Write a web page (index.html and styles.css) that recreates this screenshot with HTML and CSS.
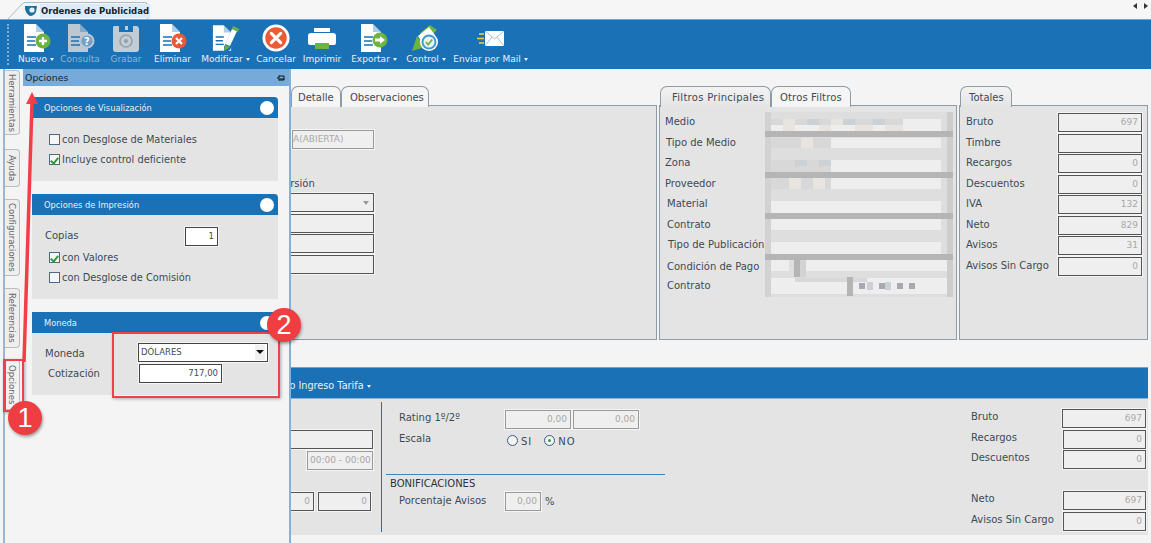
FILE: index.html
```html
<!DOCTYPE html>
<html lang="es">
<head>
<meta charset="utf-8">
<title>Ordenes de Publicidad</title>
<link rel="stylesheet" href="styles.css">
</head>
<body>
<div class="app">
  <svg class="defs" width="0" height="0">
    <defs>
      <symbol id="doc" viewBox="0 0 22 28">
        <path d="M1 0h12l8 8v20H1z" fill="currentColor"/>
        <path d="M13 0l8 8h-8z" fill="#1b71b5" opacity=".35"/>
        <path d="M4 13h9M4 17h8M4 21h9" stroke="#1b71b5" stroke-width="1.6"/>
      </symbol>
    </defs>
  </svg>

  <header class="tabstrip">
    <div class="doc-tab-wrap">
      <svg class="doc-tab-slant" width="16" height="17" viewBox="0 0 16 17"><path d="M0 17L14 2q1-1 2-1v16z" fill="#f2f4f6"/><path d="M0 17L14 2q1-1 2-1" fill="none" stroke="#aebcc8"/></svg>
      <div class="doc-tab">
        <svg class="doc-tab-icon" viewBox="0 0 12 12"><path d="M0 1h12l-1 6q-2 4-6 4Q1 9 0 4z" fill="#1f6f9f"/><circle cx="7" cy="5" r="2.6" fill="#e8f4fb"/></svg>
        <span class="doc-tab-title">Ordenes de Publicidad</span>
      </div>
    </div>
    <div class="strip-arrows"><span class="arrow-l"></span><span class="arrow-r"></span></div>
  </header>

  <nav class="toolbar">
    <div class="grip"></div>
    <div class="tools">
      <div class="tool">
        <svg class="ico" viewBox="0 0 30 28"><use href="#doc" x="2" width="22" height="28" color="#fff"/><circle cx="22" cy="17" r="7.5" fill="#6cb33f"/><path d="M22 13v8M18 17h8" stroke="#fff" stroke-width="2.4"/></svg>
        <span class="caret">Nuevo</span>
      </div>
      <div class="tool off">
        <svg class="ico" viewBox="0 0 30 28"><use href="#doc" x="2" width="22" height="28" color="#bcc8d1"/><circle cx="22" cy="17" r="7.5" fill="#bcc8d1"/><circle cx="22" cy="17" r="5.6" fill="#1b71b5" opacity=".45"/><text class="qmark" x="22" y="20.5">?</text></svg>
        <span>Consulta</span>
      </div>
      <div class="tool off">
        <svg class="ico" viewBox="0 0 30 28"><path d="M3 2h5v6h14V2h3q3 0 3 3v20q0 3-3 3H5q-3 0-3-3V3z" fill="#c3ccd3"/><rect x="14" y="2" width="3" height="4" fill="#c3ccd3"/><circle cx="15" cy="17" r="6" fill="none" stroke="#8fa1ae" stroke-width="1.5"/><circle cx="15" cy="17" r="2" fill="#8fa1ae"/></svg>
        <span>Grabar</span>
      </div>
      <div class="tool">
        <svg class="ico" viewBox="0 0 30 28"><use href="#doc" x="1" width="22" height="28" color="#fff"/><circle cx="21" cy="17" r="7.5" fill="#ea5b35"/><path d="M18 14l6 6M24 14l-6 6" stroke="#fff" stroke-width="2.2"/></svg>
        <span>Eliminar</span>
      </div>
      <div class="tool">
        <svg class="ico" viewBox="0 0 30 28"><use href="#doc" x="1" width="20" height="28" color="#fff"/><path d="M13 23l8-18 6 3-8 18-6 3z" fill="#1b71b5"/><path d="M14 20l7-15 5 2-7 15z" fill="#fff"/><path d="M21 5l1-3 6 3-1 3z" fill="#6cb33f"/><path d="M14 21l5 2-6 4z" fill="#6cb33f"/></svg>
        <span class="caret">Modificar</span>
      </div>
      <div class="tool">
        <svg class="ico" viewBox="0 0 30 30"><circle cx="15" cy="15" r="14.5" fill="#fff"/><circle cx="15" cy="15" r="11.5" fill="#ec5b38"/><path d="M10 10l10 10M20 10L10 20" stroke="#fff" stroke-width="3.2" stroke-linecap="round"/></svg>
        <span>Cancelar</span>
      </div>
      <div class="tool">
        <svg class="ico" viewBox="0 0 30 28"><path d="M7 4h16v4H7z" fill="#fff"/><path d="M4 9h22q3 0 3 3v7q0 2-2 2H3q-2 0-2-2v-7q0-3 3-3z" fill="#fff"/><rect x="8" y="19" width="14" height="6" fill="#6cb33f"/></svg>
        <span>Imprimir</span>
      </div>
      <div class="tool">
        <svg class="ico" viewBox="0 0 30 28"><use href="#doc" x="1" width="22" height="28" color="#fff"/><circle cx="21" cy="16" r="7.5" fill="#6cb33f"/><path d="M16 14.500h5V12l5 4-5 4v-2.500h-5z" fill="#fff"/></svg>
        <span class="caret">Exportar</span>
      </div>
      <div class="tool">
        <svg class="ico" viewBox="0 0 30 28"><path d="M9 9l10-8 7 5-8 8z" fill="#6cb33f"/><path d="M7 12l11-9 6 8-10 12z" fill="#fff"/><path d="M1 27l5-15 8 11z" fill="#6cb33f"/><circle cx="18" cy="18" r="9" fill="#fff"/><circle cx="18" cy="18" r="7.500" fill="#3d9ad1"/><circle cx="18" cy="18" r="5.500" fill="#e8f2f7"/><path d="M15 18l2.200 2.500 4-5" fill="none" stroke="#6cb33f" stroke-width="1.800"/></svg>
        <span class="caret">Control</span>
      </div>
      <div class="tool">
        <svg class="ico" viewBox="0 0 30 28"><rect x="9" y="7" width="19" height="15" fill="#fff"/><path d="M9 7l9.500 8L28 7M9 22l7-9M28 22l-7-9" fill="none" stroke="#9ec3de" stroke-width="1"/><path d="M3 10h5M1 14.500h7M3 19h5" stroke="#f2d24a" stroke-width="1.600"/></svg>
        <span class="caret">Enviar por Mail</span>
      </div>
    </div>
  </nav>

  <div class="workspace">
    <aside class="rail">
      <div class="rail-tab rt-herr">Herramientas</div>
      <div class="rail-tab rt-ayuda">Ayuda</div>
      <div class="rail-tab rt-conf">Configuraciones</div>
      <div class="rail-tab rt-ref">Referencias</div>
      <div class="rail-tab rt-op">Opciones</div>
    </aside>

    <main class="main">
      <div class="top-row">
        <section class="pane pane-detail">
          <div class="tabs tabs-detail">
            <div class="tab">Detalle</div>
            <div class="tab">Observaciones</div>
          </div>
          <div class="pane-body detail-body">
            <div class="field disabled f-estado">A(ABIERTA)</div>
            <div class="version-label">Versión</div>
            <div class="field f-wide f-select"><span class="sel-caret"></span></div>
            <div class="field f-wide f-tight"></div>
            <div class="field f-wide f-tight"></div>
            <div class="field f-wide f-tight"></div>
          </div>
        </section>

        <section class="pane pane-filters">
          <div class="tabs">
            <div class="tab active tab-fp">Filtros Principales</div>
            <div class="tab tab-of">Otros Filtros</div>
          </div>
          <div class="pane-body filter-body">
            <div class="filter-labels">
              <div class="fl">Medio</div>
              <div class="fl in1">Tipo de Medio</div>
              <div class="fl">Zona</div>
              <div class="fl">Proveedor</div>
              <div class="fl in2">Material</div>
              <div class="fl in2">Contrato</div>
              <div class="fl in3">Tipo de Publicación</div>
              <div class="fl in2 drop">Condición de Pago</div>
              <div class="fl in2">Contrato</div>
            </div>
            <svg class="blur" width="188" height="185" viewBox="0 0 188 185">
              <rect width="188" height="185" fill="#dedede"/>
              <rect width="6" height="185" fill="#d2d2d2"/>
              <rect x="182" width="6" height="185" fill="#cdcdcd"/>
              <g fill="#eeeeee">
                <rect x="6" y="7" width="170" height="12"/><rect x="6" y="26" width="170" height="10"/>
                <rect x="6" y="48" width="170" height="12"/><rect x="6" y="66" width="170" height="11"/>
                <rect x="6" y="89" width="170" height="12"/><rect x="6" y="107" width="170" height="11"/>
                <rect x="6" y="130" width="170" height="12"/><rect x="41" y="148" width="141" height="11"/>
                <rect x="6" y="166" width="176" height="16"/><rect x="6" y="148" width="18" height="11"/>
              </g>
              <g fill="#d8d8d8">
                <rect x="6" y="7" width="132" height="6"/><rect x="6" y="26" width="60" height="10"/>
                <rect x="6" y="48" width="60" height="12"/><rect x="6" y="66" width="60" height="11"/>
                <rect x="30" y="166" width="72" height="4"/>
              </g>
              <g fill="#e8e4e0">
                <rect x="18" y="7" width="12" height="12"/><rect x="36" y="26" width="12" height="10"/><rect x="66" y="7" width="12" height="6"/>
                <rect x="90" y="13" width="18" height="6"/><rect x="24" y="66" width="12" height="11"/><rect x="48" y="66" width="12" height="11"/>
                <rect x="120" y="13" width="18" height="6"/><rect x="54" y="13" width="12" height="6"/>
              </g>
              <g fill="#ccd1d6">
                <rect x="42" y="7" width="12" height="6"/><rect x="78" y="7" width="12" height="6"/><rect x="108" y="7" width="12" height="6"/>
                <rect x="30" y="48" width="12" height="6"/><rect x="54" y="48" width="12" height="6"/>
                <rect x="102" y="170" width="6" height="8"/><rect x="120" y="170" width="6" height="8"/>
              </g>
              <g fill="#b5b5b5">
                <rect y="19" width="188" height="6"/><rect y="60" width="188" height="6"/>
                <rect y="101" width="188" height="6"/><rect y="142" width="188" height="6"/>
                <rect x="29" y="142" width="6" height="23"/><rect x="82" y="165" width="6" height="19"/>
              </g>
              <rect x="35" y="148" width="6" height="17" fill="#d2d2d2"/>
              <g fill="#a8a8b0">
                <rect x="94" y="171" width="6" height="6"/><rect x="114" y="171" width="6" height="6"/><rect x="132" y="171" width="6" height="6"/><rect x="144" y="171" width="6" height="6"/>
              </g>
            </svg>
          </div>
        </section>

        <section class="pane pane-totals">
          <div class="tabs">
            <div class="tab active tab-tot">Totales</div>
          </div>
          <div class="pane-body totals-body">
            <div class="row"><span>Bruto</span><div class="field num">697</div></div>
            <div class="row"><span>Timbre</span><div class="field num"></div></div>
            <div class="row"><span>Recargos</span><div class="field num">0</div></div>
            <div class="row"><span>Descuentos</span><div class="field num">0</div></div>
            <div class="row"><span>IVA</span><div class="field num">132</div></div>
            <div class="row"><span>Neto</span><div class="field num">829</div></div>
            <div class="row"><span>Avisos</span><div class="field num">31</div></div>
            <div class="row"><span>Avisos Sin Cargo</span><div class="field num">0</div></div>
          </div>
        </section>
      </div>

      <div class="bluebar"><span class="caret">Modo Ingreso Tarifa</span></div>

      <div class="lower">
        <div class="col-left">
          <div class="field f-l1"></div>
          <div class="field disabled f-l2">00:00 - 00:00</div>
          <div class="pair">
            <div class="field num f-l3">0</div>
            <div class="field num f-l4">0</div>
          </div>
        </div>
        <div class="col-mid">
          <div class="mid-top">
            <div class="mid-row"><span class="mid-label rating">Rating 1º/2º</span><div class="field disabled num f-r">0,00</div><div class="field disabled num f-r">0,00</div></div>
            <div class="mid-row escala"><span class="mid-label">Escala</span>
              <span class="radio"></span><span class="rlabel r-si">SI</span>
              <span class="radio on"></span><span class="rlabel">NO</span>
            </div>
          </div>
          <div class="bonif">
            <div class="bonif-title">BONIFICACIONES</div>
            <div class="mid-row"><span class="mid-label">Porcentaje Avisos</span><div class="field disabled num f-p">0,00</div><span class="pct">%</span></div>
          </div>
        </div>
        <div class="col-right">
          <div class="row"><span>Bruto</span><div class="field num first">697</div></div>
          <div class="row"><span>Recargos</span><div class="field num">0</div></div>
          <div class="row"><span>Descuentos</span><div class="field num">0</div></div>
          <div class="row spaced"><span>Neto</span><div class="field num">697</div></div>
          <div class="row"><span>Avisos Sin Cargo</span><div class="field num">0</div></div>
        </div>
      </div>
    </main>

    <section class="drawer">
      <div class="drawer-head"><span>Opciones</span>
        <svg class="pin" viewBox="0 0 8 8"><path d="M0 4h2M2 1.500v5M2 2h5v4H2M3 5h4" fill="none" stroke="#111" stroke-width="1"/></svg>
      </div>
      <div class="group g1">
        <div class="group-head"><span>Opciones de Visualización</span><i class="dot"></i></div>
        <div class="group-body">
          <label class="check"><span class="box"></span>con Desglose de Materiales</label>
          <label class="check"><span class="box on"></span>Incluye control deficiente</label>
        </div>
      </div>
      <div class="group g2">
        <div class="group-head"><span>Opciones de Impresión</span><i class="dot"></i></div>
        <div class="group-body">
          <div class="copias"><span>Copias</span><div class="field white num copias-in">1</div></div>
          <label class="check"><span class="box on"></span>con Valores</label>
          <label class="check"><span class="box"></span>con Desglose de Comisión</label>
        </div>
      </div>
      <div class="group g3">
        <div class="group-head"><span>Moneda</span><i class="dot"></i></div>
        <div class="group-body">
          <div class="mon-row"><span class="mon-label">Moneda</span><div class="field white mon-select">DÓLARES<span class="sel-btn"></span></div></div>
          <div class="mon-row"><span class="mon-label cot">Cotización</span><div class="field white num mon-input">717,00</div></div>
        </div>
      </div>
    </section>
  </div>

  <div class="callout box-one"></div>
  <div class="callout box-two"></div>
  <svg class="arrow" width="20" height="280" viewBox="0 0 20 280"><path d="M3 270L11 10" stroke="#f23f47" stroke-width="3.500"/><path d="M11 0l6 12H5z" fill="#f23f47"/></svg>
  <div class="badge b-one">1</div>
  <div class="badge b-two">2</div>
</div>
</body>
</html>
```
FILE: styles.css
```css
* { box-sizing: border-box; }
html, body { margin: 0; height: 100%; }
body { font-family: "DejaVu Sans", sans-serif; font-size: 10px; color: #3d4a55; background: #f4f4f4; overflow: hidden; }
.defs { position: absolute; }
.app { position: relative; width: 1151px; height: 543px; overflow: hidden; display: flex; flex-direction: column; }

/* document tab strip */
.tabstrip { height: 19px; flex: none; display: flex; justify-content: space-between; background: #f6f6f6; padding: 1px 3px 0 8px; }
.doc-tab-wrap { display: flex; align-items: flex-end; height: 18px; }
.doc-tab-slant { display: block; flex: none; }
.doc-tab { width: 124px; height: 17px; display: flex; align-items: center; gap: 3px; padding-left: 1px; background: #f2f4f6; border: 1px solid #aebcc8; border-left: 0; border-bottom: 0; border-radius: 0 4px 0 0; white-space: nowrap; }
.doc-tab-title { background: #dcebf7; font-weight: bold; font-size: 8.500px; line-height: 14px; color: #15222c; padding: 0 1px; }
.doc-tab-icon { width: 12px; height: 12px; flex: none; }
.strip-arrows { display: flex; gap: 7px; padding-top: 2px; }
.arrow-l, .arrow-r { width: 0; height: 0; border-top: 3px solid transparent; border-bottom: 3px solid transparent; }
.arrow-l { border-right: 4px solid #333; }
.arrow-r { border-left: 4px solid #333; }

/* toolbar */
.toolbar { height: 50px; flex: none; display: flex; background: #1b71b5; border-top: 1px solid #9a9a9a; }
.grip { width: 8px; margin: 4px 0 4px 7px; border-left: 2px dotted #7fb0d8; flex: none; }
.tools { display: grid; grid-template-columns: 44px 44px 48px 45px 61px 40px 52px 52px 52px 77px; margin-left: -1px; }
.tool { display: flex; flex-direction: column; align-items: center; padding-top: 4px; color: #e6f0f8; font-size: 9px; white-space: nowrap; }
.tool.off { color: #8fb3cf; }
.ico { width: 30px; height: 28px; display: block; margin-bottom: 2px; }
.qmark { font-size: 10px; font-weight: bold; fill: #fff; text-anchor: middle; }
.caret::after { content: ""; display: inline-block; margin-left: 3px; vertical-align: middle; border-left: 2.500px solid transparent; border-right: 2.500px solid transparent; border-top: 3px solid currentColor; }

/* workspace */
.workspace { flex: 1; display: flex; position: relative; min-height: 0; }
.rail { width: 22px; flex: none; margin-left: 3px; margin-right: -3px; border-left: 2px solid #9db6cf; display: flex; flex-direction: column; }
.rail-tab { writing-mode: vertical-rl; width: 15px; background: #eeeeee; border: 1px solid #bcbcbc; border-left: 0; border-radius: 0 4px 4px 0; text-align: center; font-size: 8.500px; color: #666; line-height: 14px; }
.rt-herr { height: 65px; margin-top: 1px; }
.rt-ayuda { height: 38px; margin-top: 14px; }
.rt-conf { height: 77px; margin-top: 12px; }
.rt-ref { height: 60px; margin-top: 12px; }
.rt-op { height: 51px; margin-top: 11px; background: #f2f2f2; }

.main { flex: 1; min-width: 0; padding: 17px 3px 0 0; display: flex; flex-direction: column; }
.top-row { height: 254px; flex: none; display: flex; gap: 2px; }
.pane { display: flex; flex-direction: column; }
.pane-detail { width: 635px; }
.pane-filters { width: 298px; }
.pane-totals { width: 189px; }
.tabs { height: 20px; flex: none; display: flex; padding-left: 1px; position: relative; z-index: 1; margin-bottom: -1px; }
.tabs-detail { padding-left: 269px; }
.tab { height: 21px; padding: 0 8px; display: flex; align-items: center; background: #f5f5f5; border: 1px solid #8c9ca8; border-bottom: 0; border-radius: 7px 7px 0 0; color: #3d4a55; white-space: nowrap; }
.tab.active { background: linear-gradient(#f3f3f3, #e4e4e4); }
.tabs-detail .tab:first-child { width: 50px; padding-left: 6px; }
.tabs-detail .tab:last-child { width: 88px; }
.tab-fp { width: 111px; letter-spacing: .28px; padding: 0 0 0 11px; }
.tab-of { width: 80px; letter-spacing: .15px; }
.tab-tot { width: 52px; }
.pane-body { flex: 1; background: #e4e4e4; border: 1px solid #8c9ca8; }

/* fields */
.field { height: 19px; background: #efefef; border: 1px solid #555; box-shadow: 0 0 0 1px #f5f5f5; line-height: 17px; font-size: 9px; color: #a8a8a8; padding: 0 3px; white-space: nowrap; overflow: hidden; }
.field.disabled { border-color: #9a9a9a; }
.field.white { background: #fff; color: #3d4a55; border-color: #444; font-size: 8.500px; }
.num { text-align: right; }

.detail-body { padding: 24px 0 0 269px; position: relative; }
.f-estado { width: 82px; padding-left: 0; }
.version-label { margin: 28px 0 0 -14px; height: 15px; font-size: 10px; line-height: 14px; }
.f-wide { width: 149px; margin-left: -67px; }
.f-select { margin-top: 1px; position: relative; }
.f-tight { margin-top: 1.500px; }
.sel-caret { position: absolute; right: 4px; top: 7px; border-left: 3px solid transparent; border-right: 3px solid transparent; border-top: 4px solid #999; }

.filter-body { display: flex; padding-top: 5px; }
.filter-labels { width: 105px; flex: none; padding: 1px 0 0 5px; }
.fl { height: 20.500px; line-height: 20px; white-space: nowrap; }
.in1 { padding-left: 1px; }
.in2 { padding-left: 2px; }
.in3 { padding-left: 3px; }
.drop { padding-top: 1px; }
.blur { margin-top: 1px; flex: none; }

.totals-body { padding: 7px 5px 0 6px; }
.row { display: flex; justify-content: space-between; height: 20.500px; }
.row span { line-height: 18px; white-space: nowrap; }
.totals-body .field { width: 84px; }

/* lower section */
.bluebar { margin-top: 27px; height: 31px; flex: none; background: #1b71b5; border-top: 1px solid #8c9ca8; padding: 12px 0 0 247px; color: #e6f0f8; font-size: 9.700px; white-space: nowrap; }
.lower { height: 137px; flex: none; background: #e4e4e4; border-top: 1px solid #8fb6d6; display: flex; padding-top: 3px; }
.col-left { width: 360px; flex: none; padding-top: 28px; padding-left: 150px; border-right: 1px solid #2a6ea8; height: 130px; }
.f-l1 { width: 201px; }
.f-l2 { width: 66px; margin: 2px 0 0 135px; padding: 0 2px; text-align: right; }
.pair { display: flex; gap: 4px; margin-top: 22px; }
.f-l3 { width: 142px; }
.f-l4 { width: 53px; }
.col-mid { width: 279px; flex: none; margin-left: 4px; }
.mid-top { height: 72px; padding: 8px 0 0 13px; }
.mid-row { display: flex; align-items: flex-start; }
.mid-label { width: 106px; flex: none; line-height: 13px; white-space: nowrap; }
.rating { line-height: 15px; }
.f-r { width: 66px; margin-right: 2px; }
.escala { margin-top: 3px; }
.radio { width: 11px; height: 11px; margin: 3px 3px 0 2px; border: 1px solid #345d86; border-radius: 50%; background: #f4f4f4; position: relative; }
.radio.on::after { content: ""; position: absolute; left: 3px; top: 3px; width: 3px; height: 3px; border-radius: 50%; background: #3c9a3c; }
.rlabel { line-height: 20px; letter-spacing: 1px; }
.r-si { margin-right: 10px; }
.bonif { border-top: 1px solid #3a87c5; padding: 2px 0 0 4px; }
.bonif-title { font-size: 10px; line-height: 14px; color: #2b343c; }
.bonif .mid-row { padding: 1px 0 0 9px; }
.bonif .mid-label { width: 106px; line-height: 17px; }
.f-p { width: 36px; }
.pct { margin-left: 4px; line-height: 20px; }
.col-right { margin-left: auto; width: 177px; padding-top: 7px; padding-right: 2px; }
.col-right .row span { line-height: 15px; }
.col-right .field { width: 83px; }
.col-right .first { width: 84px; }
.spaced { margin-top: 20.500px; }

/* options drawer */
.drawer { position: absolute; left: 22px; top: 0; bottom: 0; width: 269px; background: #f4f4f4; border-right: 2px solid #7fb2dc; border-left: 1px solid #f4f4f4; }
.drawer-head { height: 17px; background: #76abd9; display: flex; justify-content: space-between; align-items: center; padding: 0 4px 0 2px; color: #16232e; font-size: 9.400px; }
.pin { width: 8px; height: 8px; }
.group { margin: 11px 11px 0 9px; background: #e4e4e4; }
.group + .group { margin-top: 13px; }
.group-head { height: 21px; display: flex; align-items: center; justify-content: space-between; padding: 0 4px 0 12px; background: #1b71b5; border-radius: 0 4px 0 0; color: #e6f0f8; font-size: 8.300px; position: relative; }
.dot { width: 14px; height: 14px; border-radius: 50%; background: #fff; }
.g1 .group-body { height: 63px; padding: 11px 0 0 17px; }
.g2 .group-body { height: 84px; padding: 12px 0 0 13px; }
.g3 .group-body { height: 62px; padding: 10px 0 0 13px; }
.check { display: flex; align-items: center; height: 20.500px; font-size: 9.800px; white-space: nowrap; }
.box { width: 11px; height: 11px; border: 1px solid #4a6a8a; background: #f6f6f6; margin-right: 2px; position: relative; flex: none; }
.box.on::after { content: ""; position: absolute; left: 2px; top: 1px; width: 3px; height: 6px; border: solid #2d9b3c; border-width: 0 2px 2px 0; transform: rotate(40deg); }
.copias { display: flex; height: 20px; }
.copias span { width: 140px; line-height: 18px; }
.copias-in { width: 33px; color: #3d4a55; }
.g2 .check { margin-left: 4px; }
.mon-row { display: flex; height: 21px; }
.mon-label { width: 93px; line-height: 21px; flex: none; }
.cot { padding-left: 3px; line-height: 19px; }
.mon-select { width: 130px; color: #222; padding-left: 2px; position: relative; }
.sel-btn { position: absolute; right: 2px; top: 1px; width: 10px; height: 15px; background: #f0f0f0; }
.sel-btn::after { content: ""; position: absolute; left: 1px; top: 5px; border-left: 4px solid transparent; border-right: 4px solid transparent; border-top: 4px solid #111; }
.mon-input { width: 83px; margin-left: 1px; }

/* annotations laid over the screenshot */
.callout { position: absolute; border: 2px solid #f0414a; box-shadow: 1px 1px 3px rgba(0,0,0,.3); }
.box-one { left: 3px; top: 359px; width: 21px; height: 53px; border-left-width: 3px; }
.box-two { left: 112px; top: 332px; width: 168px; height: 66px; }
.arrow { position: absolute; left: 21px; top: 92px; }
.badge { position: absolute; width: 34px; height: 34px; border-radius: 50%; background: #ef3e42; color: #fff; font: 27px/34px "Liberation Sans", sans-serif; text-align: center; box-shadow: 1px 2px 3px rgba(0,0,0,.35); }
.b-one { left: 8px; top: 401px; }
.b-two { left: 267px; top: 308px; }
```
